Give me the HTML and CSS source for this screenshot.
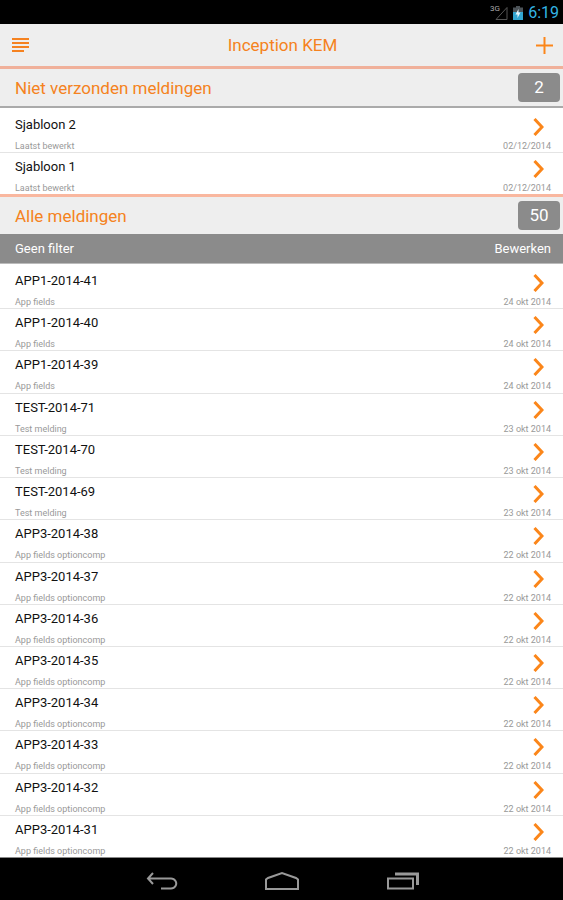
FILE: index.html
```html
<!DOCTYPE html>
<html lang="nl">
<head>
<meta charset="UTF-8" />
<meta name="viewport" content="width=device-width, initial-scale=1" />
<title>Inception KEM</title>
<link rel="stylesheet" href="styles.css">
</head>
<body>

<div class="status-bar">
  <svg class="signal" width="18" height="16" viewBox="0 0 18 16" role="img" aria-label="Signal">
    <text x="0" y="6" class="signal-text">3G</text>
    <path d="M17 2.500v12H6z" fill="none" stroke="#555" />
  </svg>
  <svg width="10" height="16" viewBox="0 0 10 16" aria-hidden="true">
    <path d="M3 1h4v1.500h3V7H0V2.500h3z" fill="#4c5358" />
    <path d="M0 7h10v8H0z" fill="#33a5d0" />
    <path d="M5.500 4L2.500 9.500h2V13l3-5.500h-2z" fill="#e6f5fb" />
  </svg>
  <span class="clock">6:19</span>
</div>

<header class="app-header">
  <button class="icon-btn" aria-label="Menu">
    <svg width="17" height="14" viewBox="0 0 17 14" aria-hidden="true">
      <path d="M0 1h17M0 5h17M0 9h17M0 13h12" stroke="#f58220" stroke-width="2" />
    </svg>
  </button>
  <h1>Inception KEM</h1>
  <button class="icon-btn" aria-label="Nieuwe melding">
    <svg width="17" height="17" viewBox="0 0 17 17" aria-hidden="true">
      <path d="M8.500 0v17M0 8.500h17" stroke="#fb861a" stroke-width="2" />
    </svg>
  </button>
</header>

<main>
  <div class="section-head underlined">
    <h2>Niet verzonden meldingen</h2>
    <span class="count">2</span>
  </div>
  <ul class="report-list" id="draftList"></ul>

  <div class="section-head">
    <h2>Alle meldingen</h2>
    <span class="count">50</span>
  </div>
  <div class="filter-bar">
    <button>Geen filter</button>
    <button>Bewerken</button>
  </div>
  <ul class="report-list grow" id="reportList"></ul>
</main>

<nav class="nav-bar">
  <button aria-label="Terug">
    <svg width="32" height="18" viewBox="0 0 32 18" fill="none" stroke="#999" stroke-width="2" aria-hidden="true">
      <path d="M7 1L2 6.500l5 5.500M2 6.500h23q3 0 4.500 2.500t0 5Q28 16.500 25 16.500H15" />
    </svg>
  </button>
  <button aria-label="Start">
    <svg width="36" height="20" viewBox="0 0 36 20" fill="none" stroke="#999" stroke-width="2" aria-hidden="true">
      <path d="M2 18V8.500L4 7l14-5 14 5 2 1.500V18z" />
    </svg>
  </button>
  <button aria-label="Recente apps">
    <svg width="34" height="18" viewBox="0 0 34 18" fill="none" stroke="#999" aria-hidden="true">
      <path d="M2 6.500h25v10H2z" stroke-width="2" />
      <path d="M9 2h22.500v11" stroke-width="3" />
    </svg>
  </button>
</nav>

<script>
  const drafts = [
    { name: 'Sjabloon 2', info: 'Laatst bewerkt', date: '02/12/2014' },
    { name: 'Sjabloon 1', info: 'Laatst bewerkt', date: '02/12/2014' }
  ];

  const reports = [
    { name: 'APP1-2014-41', info: 'App fields', date: '24 okt 2014' },
    { name: 'APP1-2014-40', info: 'App fields', date: '24 okt 2014' },
    { name: 'APP1-2014-39', info: 'App fields', date: '24 okt 2014' },
    { name: 'TEST-2014-71', info: 'Test melding', date: '23 okt 2014' },
    { name: 'TEST-2014-70', info: 'Test melding', date: '23 okt 2014' },
    { name: 'TEST-2014-69', info: 'Test melding', date: '23 okt 2014' },
    { name: 'APP3-2014-38', info: 'App fields optioncomp', date: '22 okt 2014' },
    { name: 'APP3-2014-37', info: 'App fields optioncomp', date: '22 okt 2014' },
    { name: 'APP3-2014-36', info: 'App fields optioncomp', date: '22 okt 2014' },
    { name: 'APP3-2014-35', info: 'App fields optioncomp', date: '22 okt 2014' },
    { name: 'APP3-2014-34', info: 'App fields optioncomp', date: '22 okt 2014' },
    { name: 'APP3-2014-33', info: 'App fields optioncomp', date: '22 okt 2014' },
    { name: 'APP3-2014-32', info: 'App fields optioncomp', date: '22 okt 2014' },
    { name: 'APP3-2014-31', info: 'App fields optioncomp', date: '22 okt 2014' }
  ];

  function renderList(id, items) {
    document.getElementById(id).innerHTML = items.map(item => `
      <li>
        <a href="#${item.name.replace(' ', '-')}">
          <span class="text">
            <span class="name">${item.name}</span>
            <span class="info">${item.info}</span>
          </span>
          <span class="side">
            <svg class="chevron" width="11" height="18" viewBox="0 0 11 18" aria-hidden="true">
              <path d="M1.500 1L9 9l-7.500 8" fill="none" stroke="#fb861a" stroke-width="3" />
            </svg>
            <span class="info">${item.date}</span>
          </span>
        </a>
      </li>`).join('');
  }

  renderList('draftList', drafts);
  renderList('reportList', reports);
</script>

</body>
</html>
```
FILE: styles.css
```css
* {
  box-sizing: border-box;
}

body {
  font-family: Roboto, "Liberation Sans", sans-serif;
  margin: 0;
  min-height: 100vh;
  display: flex;
  flex-direction: column;
  background: #fff;
  color: #111;
}

button {
  font: inherit;
  color: inherit;
  background: none;
  border: none;
  padding: 0;
  cursor: pointer;
}

svg {
  display: block;
}

h1,
h2 {
  margin: 0;
  font-size: 17px;
  line-height: 20px;
  font-weight: 400;
  color: #f58220;
}

/* Status bar */
.status-bar {
  display: flex;
  justify-content: flex-end;
  align-items: center;
  gap: 5px;
  height: 24px;
  padding: 2px 4px 0;
  background: #000;
}

.signal-text {
  font-size: 8px;
  fill: #aaa;
}

.clock {
  font-size: 16px;
  line-height: 20px;
  color: #33b5e5;
}

/* Header */
.app-header {
  display: flex;
  justify-content: space-between;
  align-items: center;
  height: 45px;
  padding: 0 10px 0 12px;
  background: #eee;
  border-bottom: 3px solid #f0b09a;
}

/* Lists */
main {
  flex: 1;
  display: flex;
  flex-direction: column;
}

.section-head {
  display: flex;
  justify-content: space-between;
  align-items: center;
  height: 37px;
  padding: 0 3px 0 15px;
  background: #eee;
}

.section-head.underlined {
  height: 39px;
  border-bottom: 2px solid #aaa;
}

.report-list + .section-head {
  height: 40px;
  border-top: 3px solid #f9b79f;
}

.count {
  width: 42px;
  border-radius: 4px;
  background: #8b8b8b;
  color: #fff;
  font-size: 17px;
  line-height: 29px;
  text-align: center;
}

.filter-bar {
  display: flex;
  justify-content: space-between;
  height: 30px;
  padding: 0 12px 0 15px;
  background: #8b8b8b;
  border-bottom: 1px solid #bbb;
  color: #fff;
  font-size: 13px;
}

.report-list {
  list-style: none;
  margin: 0;
  padding: 3px 0 0;
  display: flex;
  flex-direction: column;
}

.report-list.grow {
  flex: 1;
}

.report-list li {
  flex: 1 0 auto;
  min-height: 42px;
  border-bottom: 1px solid #e4e4e4;
}

.report-list li:last-child {
  min-height: 41px;
  border-bottom: none;
}

.report-list a {
  display: flex;
  justify-content: space-between;
  padding: 6px 12px 0 15px;
  color: inherit;
  text-decoration: none;
}

.text,
.side {
  display: flex;
  flex-direction: column;
  justify-content: space-between;
  height: 35px;
}

.side {
  align-items: flex-end;
  padding-top: 1px;
}

.name {
  font-size: 13px;
  line-height: 16px;
}

.info {
  font-size: 9px;
  line-height: 12px;
  color: #999;
}

.chevron {
  margin-right: 7px;
}

/* Navigation bar */
.nav-bar {
  display: flex;
  justify-content: center;
  align-items: center;
  gap: 86px;
  height: 43px;
  padding: 4px 0 0 3px;
  background: #000;
  border-top: 1px solid #888;
}
```
